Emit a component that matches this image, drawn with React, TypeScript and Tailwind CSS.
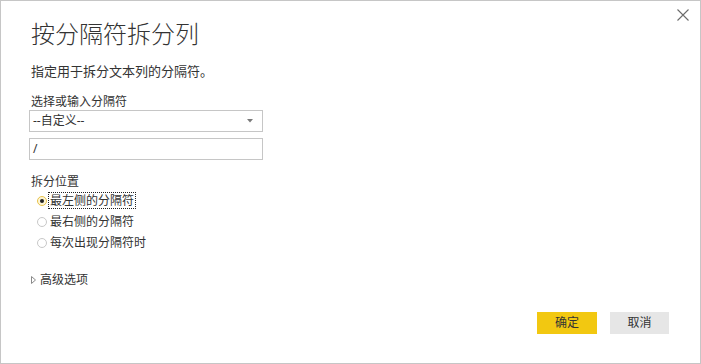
import React, { useState } from 'react';

const options = ['最左侧的分隔符', '最右侧的分隔符', '每次出现分隔符时'];

export default function App() {
  const [selected, setSelected] = useState(0);

  return (
    <div className="relative flex h-[364px] w-[701px] flex-col border border-[#c6c6c6] bg-white font-['Noto_Sans','Noto_Sans_CJK_SC',sans-serif] text-[#333]">
      {/* close */}
      <button className="absolute right-[11px] top-[7px] flex h-[13px] w-[13px] items-center justify-center">
        <svg width="12" height="12" viewBox="0 0 12 12" fill="none" stroke="#6b6b6b" strokeWidth="1.1">
          <path d="M0.5 0.5 L11.5 11.5 M11.5 0.5 L0.5 11.5" />
        </svg>
      </button>

      <div className="flex flex-col pl-[30px] pt-[17px]">
        <h1 className="h-[32px] text-[24px] font-light leading-[32px] text-[#333]">按分隔符拆分列</h1>
        <p className="mt-[11px] text-[13px] leading-[20px]">指定用于拆分文本列的分隔符。</p>

        <label className="mt-[13px] text-[12px] leading-[16px]">选择或输入分隔符</label>
        <div className="-ml-[2px] flex h-[22px] w-[234px] items-center justify-between border border-[#c6c6c6] bg-white pl-[3px] pr-[9px] text-[12px]">
          <span>--自定义--</span>
          <svg width="6" height="4" viewBox="0 0 6 4">
            <path d="M0 0 L6 0 L3 3.5 Z" fill="#7a7a7a" />
          </svg>
        </div>
        <div className="-ml-[2px] mt-[6px] flex h-[22px] w-[234px] items-center border border-[#c6c6c6] bg-white pl-[3px] text-[12px]">
          /
        </div>

        <div className="mt-[14px] text-[12px] leading-[16px]">拆分位置</div>
        <div className="flex flex-col">
          {options.map((o, i) => (
            <div
              key={o}
              className="flex h-[21px] cursor-pointer items-center pl-[6px] text-[12px]"
              onClick={() => setSelected(i)}
            >
              <span
                className={`flex h-[10px] w-[10px] items-center justify-center rounded-full border ${
                  selected === i ? 'border-[#e8c34a] bg-[#fdf5d6]' : 'border-[#c8c8c8] bg-white'
                }`}
              >
                {selected === i && <span className="h-[4px] w-[4px] rounded-full bg-[#222]" />}
              </span>
              <span
                className={`ml-[2px] px-[1px] leading-[15px] ${
                  selected === i ? 'outline outline-1 outline-dotted outline-[#222]' : 'outline-none'
                }`}
              >
                {o}
              </span>
            </div>
          ))}
        </div>

        <div className="mt-[19px] flex items-center text-[12px] leading-[16px]">
          <svg width="5" height="8" viewBox="0 0 5 8" className="ml-[0px]">
            <path d="M0.5 0.5 L4.5 4 L0.5 7.5 Z" fill="none" stroke="#8a8a8a" strokeWidth="1" />
          </svg>
          <span className="ml-[4px]">高级选项</span>
        </div>
      </div>

      <div className="mt-auto flex justify-end gap-[13px] pb-[29px] pr-[31px]">
        <button className="h-[22px] w-[60px] bg-[#f2c811] text-[12px] text-[#333]">确定</button>
        <button className="h-[22px] w-[59px] bg-[#e6e6e6] text-[12px] text-[#333]">取消</button>
      </div>
    </div>
  );
}
